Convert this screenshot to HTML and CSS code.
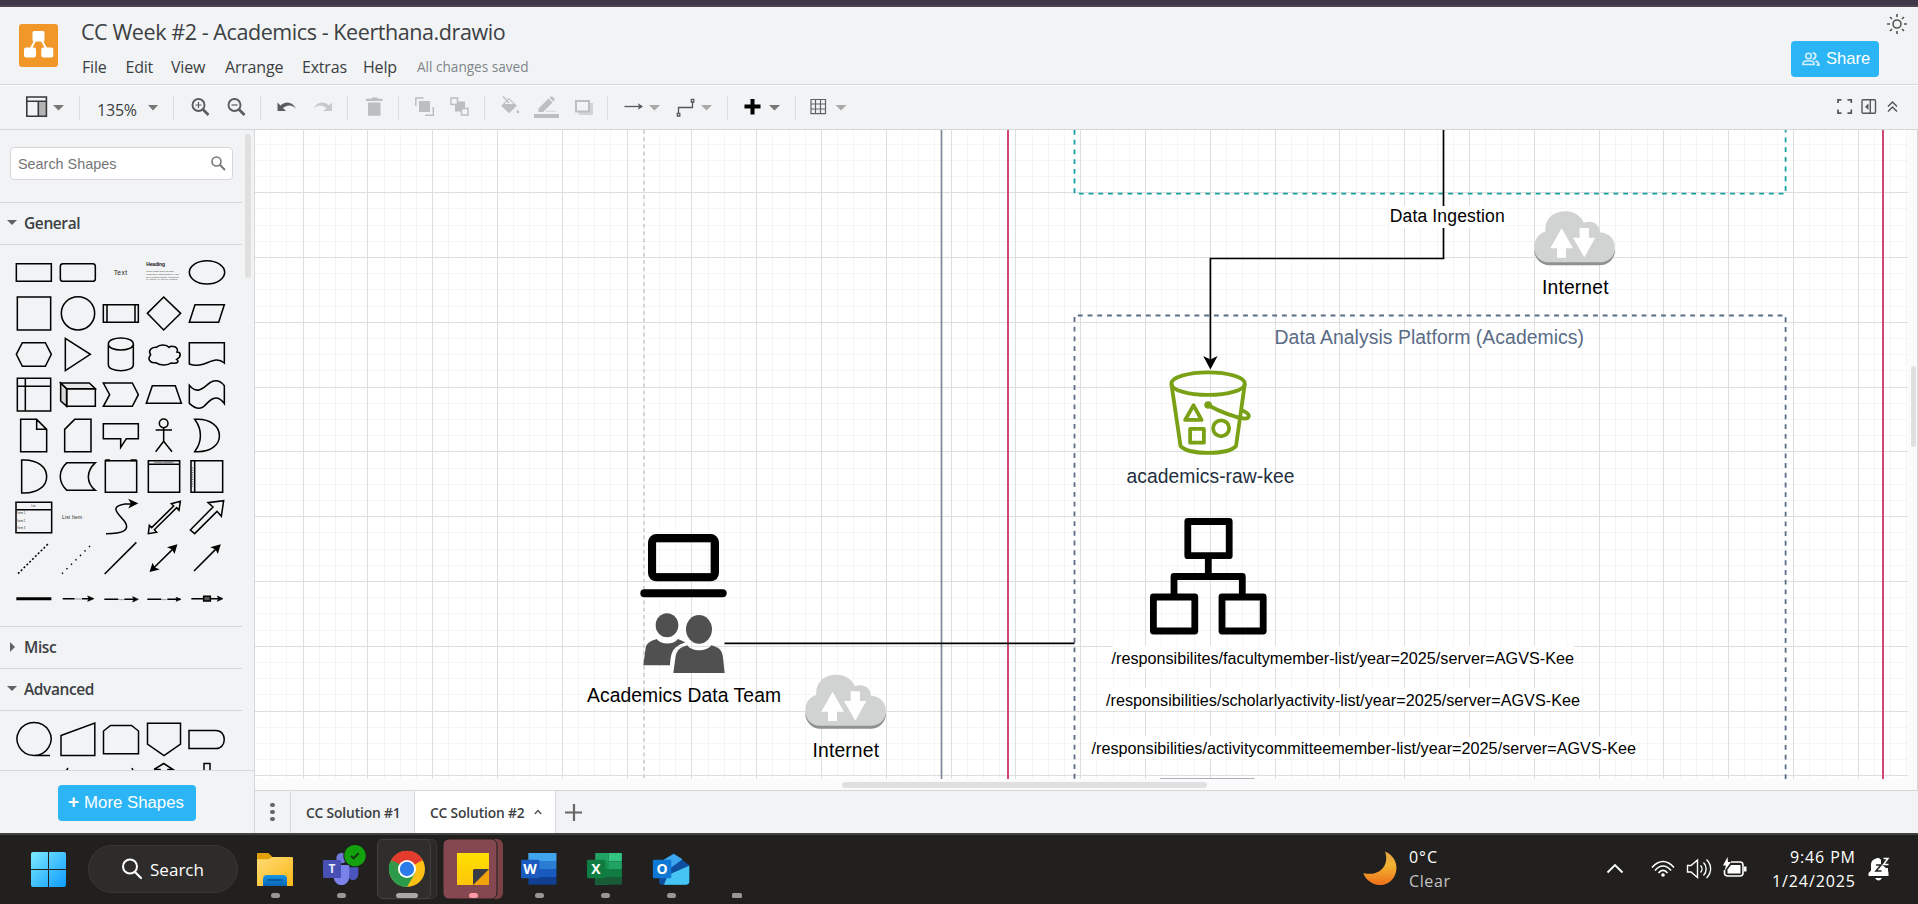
FILE: index.html
```html
<!DOCTYPE html>
<html lang="en">
<head>
<meta charset="utf-8">
<title>CC Week #2 - Academics - Keerthana.drawio</title>
<link rel="stylesheet" href="styles.css">
</head>
<body>
<div class="app">
  <div class="window-edge"></div>
  <header class="header">
    <svg class="logo" viewBox="0 0 39 43" width="39" height="43">
      <rect width="39" height="43" rx="3" fill="#f19629"/>
      <path d="M17 15L10.500 27M22 15L28.500 27" stroke="#fff" stroke-width="2"/>
      <rect x="13.500" y="7" width="12" height="10.500" rx="1.500" fill="#fff"/>
      <rect x="5" y="23.500" width="12" height="10" rx="2" fill="#fff"/>
      <rect x="22.300" y="23.500" width="12" height="10" rx="2" fill="#fff"/>
    </svg>
    <div class="titles">
      <div class="title">CC Week #2 - Academics - Keerthana.drawio</div>
      <nav class="menu"><span>File</span><span>Edit</span><span>View</span><span>Arrange</span><span>Extras</span><span>Help</span><span class="status">All changes saved</span></nav>
    </div>
    <div class="actions">
      <svg class="sun" viewBox="0 0 20 20" width="20" height="20" fill="none" stroke="#555" stroke-width="1.600">
        <circle cx="10" cy="10" r="4"/>
        <path d="M10 0V3M10 17V20M0 10H3M17 10H20M3 3L5 5M15 15L17 17M3 17L5 15M15 5L17 3"/>
      </svg>
      <div class="share">
        <svg viewBox="0 0 18 14" width="18" height="14" fill="none" stroke="#d5effc" stroke-width="1.500">
          <circle cx="6.500" cy="4" r="2.800"/><path d="M.8 12.600V11.500C1 9.500 4 8.800 6.500 8.800S12 9.500 12.200 11.500V12.600Z"/>
          <path d="M10.500 1.200C13 .5 14 2.500 13.600 4.500C13.200 6.300 12 7 10.500 6.800M13.500 8.800C16 9.500 16.900 10.500 16.900 13.200H14.600" stroke-width="1.800"/>
        </svg>
        <span>Share</span>
      </div>
    </div>
  </header>
  <div class="toolbar">
    <svg viewBox="0 86 90 43" width="90" height="43">
      <rect x="38" y="101" width="8" height="15" fill="#b3b3b3"/>
      <path d="M26.800 97H46.400V116.300H26.800ZM26.800 101.200H46.400M38.300 101V116" fill="none" stroke="#37393d" stroke-width="1.600"/>
      <path d="M53 105H64L58.500 110.500Z" fill="#777"/>
      <path d="M79.500 96V120" stroke="#dadce0"/>
    </svg>
    <span class="zoom">135%</span>
    <svg viewBox="140 86 720 43" width="720" height="43">
      <path d="M173.500 96V120M260.500 96V120M347.500 96V120M398.500 96V120M484.500 96V120M607.500 96V120M727.500 96V120M795.500 96V120" stroke="#dadce0"/>
      <path d="M148 105H158L153 110.500ZM769 105H780L774.500 110.500Z" fill="#777"/>
      <path d="M649 105H660L654.500 110.500ZM701 105H712L706.500 110.500ZM835.500 105H846.500L841 110.500Z" fill="#aaa"/>
      <g fill="none" stroke="#5a5c60" stroke-width="1.900">
        <circle cx="198.500" cy="105" r="6"/><path d="M203 109.500L208.500 115" stroke-width="2.600"/>
        <path d="M195.500 105H201.500M198.500 102V108" stroke-width="1.200"/>
        <circle cx="234.500" cy="105" r="6"/><path d="M239 109.500L244.500 115" stroke-width="2.600"/>
        <path d="M231.500 105H237.500" stroke-width="1.200"/>
      </g>
      <path d="M277.500 102.500V111H286L283 108C287 104.500 292 104.500 296 108.500C292.500 101.500 285.500 100.500 280.500 105.500Z" fill="#5a5c60"/>
      <path d="M332 102.500V111H323.500L326.500 108C322.500 104.500 317.500 104.500 313.500 108.500C317 101.500 324 100.500 329 105.500Z" fill="#c6c8ca"/>
      <path d="M366 98.700H371L372.500 97.500H377L378.500 98.700H382.500V101H366ZM368 102.500H380.500V115.800H368Z" fill="#bcbec1"/>
      <g fill="#bcbec1">
        <rect x="419" y="101" width="11" height="11"/>
        <path d="M415.800 106V98H423.500M433.300 107V115.300H425" fill="none" stroke="#bcbec1" stroke-width="1.500"/>
        <rect x="455" y="101.500" width="10" height="10"/>
        <path d="M451 98H457.500V104.500H451ZM461.500 108.500H468V115H461.500Z" fill="#f1f3f4" stroke="#bcbec1" stroke-width="1.500"/>
        <path d="M509 98L516.800 105.800L509 113.300L501.200 105.800ZM517.500 109.500Q520.500 112 518.500 113.300Q516.500 113.500 516.500 111.500Z"/>
        <path d="M509 99.500L504.500 104H513.500Z" fill="#f1f3f4"/><path d="M503 96.500L509 103" stroke="#bcbec1" stroke-width="1.300"/>
        <path d="M538.500 108.500L548.500 98.500L552.500 102.500L543 112H538.500ZM549.500 97.500Q551.500 95.500 554 98Q555.500 100 553.500 101.500ZM534 114H559V118H534Z"/>
        <path d="M546 111.300H555.500" stroke="#d2d4d6" stroke-width="1"/>
        <rect x="578.500" y="103" width="14.500" height="12" fill="#d2d4d6"/>
        <rect x="576" y="101" width="13" height="10.500" fill="#f1f3f4" stroke="#bcbec1" stroke-width="2"/>
      </g>
      <path d="M624.500 106.500H640" stroke="#55575b" stroke-width="1.300"/><path d="M638 103.200L643 106.500L638 109.800L639 106.500Z" fill="#55575b"/>
      <path d="M678.500 113V107.500H692.500V102M677.300 113.300H679.800V116H677.300ZM691.300 99.300H693.800V102H691.300Z" fill="none" stroke="#55575b" stroke-width="1.300"/>
      <path d="M752.500 99V114.500M744.500 106.600H760.500" stroke="#000" stroke-width="4"/>
      <path d="M811 99.500H825.500V113.700H811ZM815.500 99V114M820.500 99V114M811 104H826M811 109H826" fill="none" stroke="#606266" stroke-width="1.200"/>
    </svg>
    <div class="spacer"></div>
    <svg viewBox="1830 86 88 43" width="88" height="43" fill="none" stroke="#55575b" stroke-width="1.700">
      <path d="M1838 103V99.800H1841.500M1847.500 99.800H1851.300V103M1851.300 109.500V113.200H1847.500M1841.500 113.200H1838V109.500"/>
      <rect x="1862" y="99.800" width="13.500" height="13.500" rx="1" stroke-width="1.400"/><path d="M1870.300 100V113" stroke-width="1.400"/><path d="M1868.500 103.500V110L1865 106.700Z" fill="#55575b" stroke="none"/>
      <path d="M1888 106.500L1892.500 102L1897 106.500M1888 111.500L1892.500 107L1897 111.500" stroke-width="1.500"/>
    </svg>
  </div>
  <main class="work">
    <aside class="sidebar">
      <div class="palettes">
        <div class="search-row"><div class="search"><span>Search Shapes</span>
          <svg viewBox="0 0 15 15" width="15" height="15" fill="none" stroke="#777" stroke-width="1.600"><circle cx="5.500" cy="5.500" r="4.500"/><path d="M9 9L14 14" stroke-width="2"/></svg></div></div>
        <div class="section"><i class="tri down"></i>General</div>
        <svg class="shapes" viewBox="0 15 726 1143" width="242" height="381" fill="none" stroke="#000" stroke-width="4.600">
          <path d="M49 71H154V124H49Z"/><rect x="181" y="71" width="105" height="53" rx="8"/>
          <text x="361" y="104" text-anchor="middle" font-size="20" class="t" textLength="40">Text</text>
          <text x="439" y="77" font-size="15" font-weight="bold" class="t" textLength="56">Heading</text>
          <g font-size="6" class="t"><text x="439" y="96" textLength="84">Lorem ipsum dolor sit amet,</text><text x="439" y="105" textLength="97">consectetur adipisicing elit, sed</text><text x="439" y="113" textLength="97">do eiusmod tempor incididunt</text><text x="439" y="121" textLength="92">ut labore et dolore magna</text></g>
          <ellipse cx="621" cy="97" rx="53" ry="35"/>
          <path d="M52 171H152V270H52Z"/><circle cx="234" cy="220" r="50"/>
          <path d="M310 194H415V247H310ZM321 194V247M405 194V247M491 171L542 220L491 270L442 220ZM585 194H673L656 247H568Z"/>
          <path d="M67 308H136L154 343L136 379H67L49 343ZM196 295L271 343L196 392Z"/>
          <path d="M325 312V374C325 398 400 398 400 374V312M400 312C400 336 325 336 325 312C325 288 400 288 400 312Z"/>
          <path d="M470 322C452 320 444 334 452 344C440 358 452 371 467 368C480 379 506 375 513 369C534 373 538 364 530 358C546 349 542 336 531 336C538 320 514 315 507 322C498 311 477 314 470 322Z"/>
          <path d="M568 308H673V369C640 341 614 390 568 372Z"/>
          <path d="M52 415H152V513H52ZM52 439H152M76 415V513"/>
          <path d="M182 429L200 446V499L182 483Z" fill="#d6d6d6"/><path d="M182 429H268L286 446H200Z" fill="#e6e6e6"/><path d="M200 446H286V499H200Z"/>
          <path d="M310 429H397L415 464L397 499H310L329 464ZM457 437H526L544 490H439Z"/>
          <path d="M568 436C597 472 620 430 635 425C650 419 663 424 673 437V491C648 457 628 482 612 499C598 511 580 501 568 490Z"/>
          <path d="M62 538H110L140 568V635H62ZM110 538V568H140M224 538H273V635H194V568ZM310 551H415V596H379L362 622V596H310Z"/>
          <circle cx="491" cy="550" r="13"/><path d="M491 563V604M467 570H516M467 635L491 604L516 635"/>
          <path d="M584 538C680 530 686 642 584 635C607 605 607 568 584 538ZM65 660C165 655 165 765 65 759Z"/>
          <path d="M201 668H286C258 695 258 727 286 751H201C174 727 174 692 201 668ZM316 662H410V757H316Z"/><path d="M316 661H330M392 661H410" stroke-width="6"/>
          <path d="M445 662H539V757H445ZM445 673H539M573 662H668V757H573ZM584 662V757"/>
          <text x="491" y="670" font-size="7" font-weight="bold" text-anchor="middle" class="t">Vertical Container</text>
          <path d="M578 682V740" stroke-width="2" stroke-dasharray="3 4"/>
          <path d="M48 787H155V878H48ZM48 809H155"/>
          <g class="t" font-size="8"><text x="100" y="801" text-anchor="middle">List</text><text x="52" y="821" textLength="24">Item 1</text><text x="52" y="845" textLength="24">Item 2</text><text x="52" y="866" textLength="24">Item 3</text></g>
          <text x="186" y="837" font-size="14.500" class="t" textLength="60">List Item</text>
          <path d="M318 881C370 881 390 870 375 846C355 820 325 800 375 792H402"/><path d="M410 790L390 781L395 790L390 800Z" fill="#000"/>
          <path d="M445 881L448 856L455 863L521 798L514 791L541 784L537 811L530 803L463 869L470 877ZM571 870L639 801L624 788L671 782L664 829L651 814L584 881Z"/>
          <path d="M54 1001L147 909" stroke-dasharray="6 6"/><path d="M186 1001L275 913" stroke-dasharray="4 15"/>
          <path d="M314 1002L409 907M455 990L526 920M582 993L655 920"/>
          <path d="M452 993L458 974L463 984L472 988ZM529 916L523 936L518 926L508 922ZM659 916L653 936L648 926L638 922Z" fill="#000"/>
          <path d="M49 1076H154" stroke-width="9"/>
          <path d="M188 1076H224M246 1076H272M313 1078H355M373 1078H405M442 1078H484M502 1078H540M574 1076H610M632 1076H660"/>
          <path d="M282 1076L263 1068L267 1076L263 1084ZM415 1078L398 1070L402 1078L398 1086ZM543 1078L528 1072L532 1078L528 1084ZM669 1076L652 1068L656 1076L652 1084Z" fill="#000" stroke-width="2"/>
          <path d="M611 1069H631V1083H611Z" fill="#555"/><path d="M226 1077H245M357 1079H371M486 1079H500" stroke-width="2" stroke="#666"/>
        </svg>
        <div class="section"><i class="tri right"></i>Misc</div>
        <div class="section"><i class="tri down"></i>Advanced</div>
        <svg class="shapes" viewBox="0 711 242 61" width="242" height="61" fill="none" stroke="#000" stroke-width="1.500">
          <path d="M50 755.500H34A17 16.500 0 1 1 34.100 755.500M61 735.500L94.800 723V755.500H61ZM103.500 731L110.500 725.500H131.500L138.500 731V753.700H103.500ZM147.500 723.300H180.500V744L164 755.500L147.500 744ZM189 730.500H216C227 730.500 227 748.500 216 748.500H189Z"/>
          <path d="M23 771H48M65 773L68 768M132 768L134 773M154 769.500L163.700 763.500L173 769.500H168V773M160 773V769.500H154M204 773V763.500H210V773"/>
        </svg>
        <i class="side-thumb"></i>
      </div>
      <div class="more-row"><div class="more"><b>+</b>More Shapes</div></div>
    </aside>
    <section class="stage">
      <div class="canvas">
        <svg class="diagram" viewBox="255 130 1653 649" width="1653" height="649">
          <path id="minor" class="minor"/><path id="major" class="major"/>
          <path d="M644 130V779" stroke="#d5d5d5" stroke-width="2" stroke-dasharray="3.700 3.540"/>
          <path d="M941.500 130V779" stroke="#7d8998" stroke-width="1.700"/>
          <path d="M1008 130V779M1883 130V779" stroke="#cd3468" stroke-width="1.800"/>
          <path d="M1074.500 130V193.700H1785.600V130" class="dash" stroke="#16a2a4"/>
          <path d="M1785.600 779V315.500H1074.500V779" class="dash" stroke="#5a6c86"/>
          <g fill="none" stroke="#000" stroke-width="1.700">
            <path d="M1443.500 130V258.500H1210.400V360M724.500 643.400H1074.500"/>
          </g>
          <path d="M1210.400 369.500L1203.200 356L1210.400 359.500L1217.600 356Z"/>
          <rect x="1389" y="206" width="116" height="22" fill="#fff"/>
          <rect x="1112" y="646" width="462" height="22" fill="#fff"/><rect x="1106" y="688" width="474" height="22" fill="#fff"/><rect x="1091" y="736.500" width="545" height="22" fill="#fff"/>
          <path d="M1160 778.500H1254.500" stroke="#aab0b9"/>
          <g transform="translate(1060 120) scale(.3827 .3333)" class="bucket">
            <ellipse cx="387" cy="791" rx="96" ry="34"/>
            <path d="M291 791L315 978C335 1006 440 1006 460 978L483 791"/>
            <path d="M349 856L370 900H327ZM340 927H376V968H340ZM386 855C420 876 450 890 482 896C500 896 497 880 474 871"/>
            <ellipse cx="421" cy="925" rx="21" ry="24"/><ellipse cx="387" cy="855" rx="9" ry="10"/>
          </g>
          <g fill="none" stroke="#000" stroke-width="6.800" stroke-linejoin="round">
            <path d="M1187.800 521.500H1229.200V555.700H1187.800ZM1153.400 597H1194.800V631H1153.400ZM1222 597H1263.200V631H1222ZM1208.300 556V576.500M1174 597V576.500H1242.300V597"/>
          </g>
          <g transform="translate(560 500) scale(.3333)">
            <rect x="276" y="114" width="189" height="118" rx="13" fill="none" stroke="#000" stroke-width="24"/>
            <path d="M287 126H453V221H287Z" fill="none" stroke="#000" stroke-width="2"/>
            <path d="M253 280H488" stroke="#000" stroke-width="24" stroke-linecap="round"/>
            <g fill="#505050">
              <ellipse cx="321" cy="376" rx="34" ry="36"/><ellipse cx="417" cy="388" rx="39" ry="43"/>
              <path d="M250 496L257 443C261 427 275 422 290 417C304 435 340 435 354 417L376 427C338 441 333 455 330 496Z"/>
              <path d="M340 519L347 468C352 446 365 442 382 436C395 456 440 456 454 436C475 443 486 447 489 472L494 519Z"/>
            </g>
          </g>
          <defs><g id="cloud" transform="scale(.3333)">
            <path d="M45 162C18 162 0 139 0 117H242C242 140 225 162 195 162Z" fill="#8f9191"/>
            <path d="M45 153C15 153 0 132 0 108C0 82 14 66 33 61C30 20 60 0 93 0C123 0 141 17 149 35C172 25 196 38 197 63C225 65 242 84 242 108C242 134 225 153 195 153Z" fill="#d1d3d3"/>
            <path d="M82 51L116 111H95V139H68V111H48ZM136 50H164V79H183L150 138L116 79H136Z" fill="#fff"/>
          </g></defs>
          <use href="#cloud" transform="translate(805.300 674.700)"/><use href="#cloud" transform="translate(1534.300 211.300)"/>
          <g class="label">
            <text x="1389.700" y="222" font-size="17.550" textLength="115">Data Ingestion</text>
            <text x="1542" y="293.700" font-size="19.300" textLength="66.500">Internet</text>
            <text x="1274.500" y="344" font-size="19.400" textLength="309.500" fill="#5a6c86">Data Analysis Platform (Academics)</text>
            <text x="1126.500" y="483" font-size="19.300" textLength="168" fill="#232f3e">academics-raw-kee</text>
            <text x="587" y="701.700" font-size="19.300" textLength="194">Academics Data Team</text>
            <text x="812.500" y="756.700" font-size="19.300" textLength="66.500">Internet</text>
            <text x="1111.500" y="664" font-size="16.200" textLength="462.500">/responsibilites/facultymember-list/year=2025/server=AGVS-Kee</text>
            <text x="1106" y="706" font-size="16.200" textLength="474">/responsibilities/scholarlyactivity-list/year=2025/server=AGVS-Kee</text>
            <text x="1091.500" y="754" font-size="16.200" textLength="544.500">/responsibilities/activitycommitteemember-list/year=2025/server=AGVS-Kee</text>
          </g>
        </svg>
        <i class="thumb-v"></i><i class="thumb-h"></i>
      </div>
      <div class="tabs">
        <div class="dots"><i></i><i></i><i></i></div>
        <div class="tab t1">CC Solution #1</div>
        <div class="tab t2">CC Solution #2<svg viewBox="0 0 8 6" width="8" height="6" fill="none" stroke="#555" stroke-width="1.500"><path d="M.8 5L4 1.500L7.200 5"/></svg></div>
        <svg class="add" viewBox="0 0 18 18" width="18" height="18" stroke="#666" stroke-width="2.200"><path d="M9 0V17M0 8.500H17"/></svg>
      </div>
    </section>
  </main>
  <footer class="taskbar">
    <svg viewBox="0 835 760 69" width="760" height="69">
      <defs>
        <linearGradient id="win" x2="1" y2="1"><stop offset="0" stop-color="#7deaff"/><stop offset="1" stop-color="#0c9bfd"/></linearGradient>
        <linearGradient id="fold" x2="1" y2="1"><stop offset="0" stop-color="#ffdc75"/><stop offset="1" stop-color="#fbb819"/></linearGradient>
        <linearGradient id="blue" y2="1" x2="0"><stop offset="0" stop-color="#1496e4"/><stop offset="1" stop-color="#0864b4"/></linearGradient>
        <linearGradient id="note" x2="0" y2="1"><stop offset="0" stop-color="#ffe100"/><stop offset="1" stop-color="#fcc50a"/></linearGradient>
      </defs>
      <path d="M33 852H48V869H31V854Q31 852 33 852ZM49 852H64Q66 852 66 854V869H49ZM31 870H48V887H33Q31 887 31 885ZM49 870H66V885Q66 887 64 887H49Z" fill="url(#win)"/>
      <rect x="88.500" y="845.500" width="149" height="47" rx="23.500" fill="#2d2c2b" stroke="#383736"/>
      <circle cx="130" cy="866.500" r="7" fill="none" stroke="#fff" stroke-width="2"/><path d="M135 872L141 878" stroke="#fff" stroke-width="2.200" stroke-linecap="round"/>
      <text x="150" y="876" font-size="17" fill="#fff" textLength="54" lengthAdjust="spacingAndGlyphs" class="ui">Search</text>
      <g transform="translate(240 836) scale(.3333)">
        <path d="M51 54Q51 51 54 51H85L97 62V75H51Z" fill="#e2a109"/>
        <path d="M51 70H85L97 63H156Q159 63 159 66V150H51Z" fill="url(#fold)"/>
        <path d="M69 150V129Q69 117 81 117H129Q141 117 141 129V150Z" fill="url(#blue)"/><path d="M83 132H126" stroke="#075092" stroke-width="4" stroke-linecap="round"/>
        <circle cx="305" cy="66" r="16" fill="#7078dc"/><path d="M327 94H355V112C355 138 327 137 327 122Z" fill="#4b53bc"/>
        <path d="M283 87H328V120C328 156 283 156 281 122Z" fill="#7b83eb"/><rect x="249" y="72" width="54" height="54" rx="4" fill="#4950b4"/>
        <text x="276" y="112" font-size="36" font-weight="bold" text-anchor="middle" fill="#e8e9ff" class="ui">T</text>
        <circle cx="344" cy="59" r="34" fill="#21201e"/><circle cx="345" cy="59" r="32" fill="#13a10e"/><path d="M333 60L341 67L356 52" fill="none" stroke="#123a12" stroke-width="6"/>
        <rect x="432" y="10" width="158" height="178" rx="16" fill="#2a2928" stroke="#3b3a39" stroke-width="3"/>
        <rect x="413" y="10" width="158" height="178" rx="16" fill="#2f2e2d" stroke="#454443" stroke-width="3"/>
        <circle cx="501" cy="99" r="54" fill="#fdc015"/>
        <path d="M501 99L454 72A54 54 0 0 1 548 72Z" fill="#e33b2e"/>
        <path d="M454 72A54 54 0 0 0 501 153L525 112L501 99L477 112Z" fill="#2b9a4b"/>
        <path d="M454 72H501V99H470Z" fill="#e33b2e"/><path d="M454 72L477 112L490 90Z" fill="#2b9a4b"/>
        <circle cx="501" cy="99" r="27" fill="#fff"/><circle cx="501" cy="99" r="21.500" fill="#2b7bea"/>
        <rect x="627" y="9" width="162" height="180" rx="18" fill="#7c4147"/><rect x="609" y="9" width="162" height="180" rx="18" fill="#854850" stroke="#21201e" stroke-width="3"/>
        <path d="M651 51H747V99L699 147H651Z" fill="url(#note)"/><path d="M747 99V147H699Z" fill="#f0a30a"/><path d="M699 147V104Q699 99 704 99H747Z" fill="#393b42"/>
      </g>
      <g transform="translate(0 820) scale(.4847 .3333)">
        <g><path d="M1090 99H1148V124H1090Z" fill="#41a5ee"/><path d="M1090 123H1148V147H1090Z" fill="#2b7cd3"/><path d="M1090 147H1148V171H1090Z" fill="#185abd"/><path d="M1090 171H1148V194H1090Z" fill="#103f91"/></g>
        <rect x="1075" y="119" width="38" height="56" rx="3" fill="#1a5bc0"/>
        <path d="M1228 99H1256V194H1228Z" fill="#21a366"/><path d="M1256 99H1283V124H1256Z" fill="#33c481"/><path d="M1228 124H1256V147H1228Z" fill="#1a9355"/><path d="M1256 124H1283V147H1256Z" fill="#21a366"/><path d="M1228 147H1283V171H1228Z" fill="#107c41"/><path d="M1228 171H1283V194H1228Z" fill="#185c37"/>
        <rect x="1211" y="119" width="38" height="56" rx="3" fill="#107c41"/>
        <path d="M1360 130L1390 101L1422 135V185Q1422 194 1414 194H1366Q1360 194 1360 185Z" fill="#0f4fa0"/>
        <path d="M1362 125L1390 101L1408 118L1378 150Z" fill="#3ba7f0"/><path d="M1378 165L1422 137V185Q1422 194 1414 194H1370Z" fill="#46c5f5"/>
        <rect x="1347" y="119" width="38" height="56" rx="3" fill="#0f78d4"/>
      </g>
      <g class="ui" fill="#fff" font-size="14" font-weight="bold" text-anchor="middle"><text x="530" y="874">W</text><text x="596" y="874">X</text><text x="662" y="874">O</text></g>
      <g fill="#989796"><rect x="271" y="893" width="9" height="5" rx="2.500"/><rect x="337" y="893" width="9" height="5" rx="2.500"/><rect x="396" y="893" width="22" height="5" rx="2.500" fill="#aaa8a7"/><rect x="469" y="893" width="9" height="5" rx="2.500" fill="#ff9aa5"/><rect x="535" y="893" width="9" height="5" rx="2.500"/><rect x="601" y="893" width="9" height="5" rx="2.500"/><rect x="667" y="893" width="9" height="5" rx="2.500"/><rect x="732" y="893" width="10" height="5" rx="1.500"/></g>
    </svg>
    <svg viewBox="1350 835 568 69" width="568" height="69">
      <defs><linearGradient id="moon" x2="0" y2="1"><stop offset="0" stop-color="#e3a04a"/><stop offset=".4" stop-color="#f2b430"/><stop offset="1" stop-color="#ee6f1a"/></linearGradient></defs>
      <path d="M1385 851.500C1394 855 1398 864 1396 872C1393 884 1381 888 1372 883C1367 880 1364.500 877 1363.500 873C1379 877 1390 866 1385 851.500Z" fill="url(#moon)"/>
      <g class="ui" font-size="16" fill="#fff">
        <text x="1409" y="863" textLength="28">0°C</text><text x="1409" y="887" fill="#c4c3c2" textLength="41">Clear</text>
        <text x="1790" y="863" textLength="65">9:46 PM</text><text x="1772" y="887" textLength="83">1/24/2025</text>
      </g>
      <g fill="none" stroke="#fff" stroke-width="1.600">
        <path d="M1607.500 872.500L1615 865L1622.500 872.500" stroke-width="1.900"/>
        <path d="M1652 867.500C1659 859.500 1667 859.500 1674 867.500M1655 870.500C1660 864.500 1666 864.500 1671 870.500M1658.500 873C1661 869.500 1665 869.500 1667.500 873"/><circle cx="1663" cy="875" r="1.800" fill="#fff" stroke="none"/>
        <path d="M1687.500 865.500H1691L1697.500 860V877.500L1691 872H1687.500ZM1700.500 865.500C1702.500 867.500 1702.500 870.500 1700.500 872.500M1703.500 862.500C1707 866 1707 872 1703.500 875.500M1706.500 859.500C1712 865 1712 872.500 1706.500 878" stroke-width="1.400"/>
        <path d="M1731 862H1740Q1743 862 1743 865V873Q1743 876 1740 876H1728Q1724.500 876 1724.500 873V870" /><path d="M1744 866.500H1746.500V871.500H1744Z" fill="#fff" stroke="none"/><path d="M1731 865H1740.500V873.500H1727.500V869.500Z" fill="#fff" stroke="none"/><path d="M1727.500 857L1723 865.500H1726L1724.500 871L1731 862H1728Z" fill="#fff" stroke="none"/>
      </g>
      <path d="M1868.500 876V873L1871 870.500V865C1871 860 1875 858 1879 858L1888 866V870.500L1888.500 873V876ZM1875 878H1882Q1878.500 883 1875 878Z" fill="#fff"/>
      <path d="M1881 857H1890V868H1886L1881 864Z" fill="#21201e"/>
      <path d="M1876 865H1881L1876 871H1881.500" fill="none" stroke="#21201e" stroke-width="1.600"/><path d="M1883.500 858.500H1888L1883.500 864.500H1888.500" fill="none" stroke="#fff" stroke-width="1.500"/>
    </svg>
  </footer>
</div>
<script src="grid.js"></script>
</body>
</html>
```
FILE: grid.js
```js
// Grid lines snapped to whole pixels: every fourth line is a major one.
const step = 16.2, left = 255, right = 1908, top0 = 130, bottom = 779;
const parts = { minor: "", major: "" };
for (let i = -16; i < 100; i++) {
  const x = Math.floor(497.4 + i * step) + 0.5;
  if (x > left && x < right) parts[i % 4 ? "minor" : "major"] += `M${x} ${top0}V${bottom}`;
}
for (let i = -4; i < 40; i++) {
  const y = Math.floor(192.6 + i * step) + 0.5;
  if (y > top0 && y < bottom) parts[i % 4 ? "minor" : "major"] += `M${left} ${y}H${right}`;
}
for (const id in parts) document.getElementById(id).setAttribute("d", parts[id]);
```
FILE: styles.css
```css
* { box-sizing: border-box; }
body { margin: 0; width: 1918px; height: 904px; overflow: hidden; font-family: "Open Sans", "Noto Sans", sans-serif; color: #3c4043; }
svg { display: block; flex: none; }
.app { height: 904px; display: flex; flex-direction: column; background: #f1f3f4; }
.window-edge { height: 7px; background: #40374b; border-bottom: 2px solid #4d4351; flex: none; }
.header { height: 78px; flex: none; display: flex; border-bottom: 1px solid #d5d7da; }
.logo { margin: 17px 0 0 19px; }
.titles { margin-left: 24px; white-space: nowrap; }
.title { margin: 9px 0 0 -1px; font-size: 21.5px; line-height: 32px; letter-spacing: -0.42px; }
.menu { display: grid; grid-template-columns: 43.5px 45.5px 54px 77px 61px 54px auto; margin-top: 6px; font-size: 16px; line-height: 26px; letter-spacing: -0.2px; }
.status { font-size: 13.6px; color: #80868b; letter-spacing: 0; }
.actions { margin-left: auto; width: 130px; }
.sun { margin: 7px 0 0 99px; }
.share { width: 88px; height: 36px; margin: 7px 0 0 3px; padding-left: 11px; display: flex; align-items: center; gap: 6px; border-radius: 4px; background: #2bb5f5; color: #fff; font: 16.6px "Liberation Sans", sans-serif; }
.toolbar { height: 45px; flex: none; border-top: 1px solid #fff; border-bottom: 1px solid #d5d7da; display: flex; align-items: flex-start; }
.zoom { width: 50px; padding: 12px 0 0 7px; font-size: 16px; line-height: 24px; letter-spacing: -0.2px; white-space: nowrap; }
.spacer { flex: 1; }
.work { height: 705px; flex: none; display: flex; border-bottom: 2px solid #414141; }
.sidebar { width: 255px; flex: none; border-right: 1px solid #d5d7da; display: flex; flex-direction: column; }
.palettes { height: 640px; overflow: hidden; position: relative; flex: none; }
.search-row { height: 72px; padding: 17px 0 0 10px; }
.search { width: 223px; height: 33px; border: 1px solid #d5d7da; border-radius: 4px; background: #fff; display: flex; align-items: center; justify-content: space-between; padding: 0 6px 0 7px; font: 14.4px "Liberation Sans", sans-serif; color: #757575; }
.section { width: 242px; height: 43px; border-top: 1px solid #d5d7da; border-bottom: 1px solid #d5d7da; display: flex; align-items: center; font-size: 15.5px; line-height: 20px; padding-bottom: 1px; font-weight: 600; letter-spacing: -0.4px; }
.section + .section { border-top: 0; height: 42px; }
.tri { width: 24px; height: 10px; display: block; }
.tri::before { content: ""; display: block; width: 0; height: 0; margin-left: 7px; border: 5px solid transparent; }
.tri.down::before { border-top-color: #5f6368; border-bottom: 0; margin-top: 2px; }
.tri.right::before { border-left-color: #5f6368; border-right: 0; margin-left: 10px; }
.t { fill: #222; stroke: none; font-family: "Liberation Sans", sans-serif; }
.side-thumb { position: absolute; left: 245px; top: 4px; width: 6px; height: 144px; border-radius: 3px; background: #e0e0e0; }
.more-row { border-top: 1px solid #d5d7da; flex: 1; padding: 14px 0 0 58px; }
.more { width: 138px; height: 36px; border-radius: 4px; background: #2bb5f5; color: #fff; font: 16.8px/36px "Liberation Sans", sans-serif; padding-left: 10px; white-space: nowrap; }
.more b { font-size: 19px; margin-right: 5px; font-weight: bold; line-height: 30px; }
.stage { flex: 1; display: flex; flex-direction: column; min-width: 0; }
.canvas { height: 661px; position: relative; flex: none; background: #fbfbfb; border-bottom: 1px solid #d5d7da; border-right: 1px solid #d5d7da; }
.diagram { background: #fff; }
.minor { stroke: #f5f5f5; }
.major { stroke: #dedede; }
.dash { fill: none; stroke-width: 1.8; stroke-dasharray: 4.86 4.86; }
.label { font-family: "Liberation Sans", sans-serif; }
.bucket * { fill: none; stroke: #7aa116; stroke-width: 3.8px; vector-effect: non-scaling-stroke; stroke-linejoin: round; }
.bucket ellipse:last-child { fill: #7aa116; stroke-width: 1px; }
.thumb-v, .thumb-h { position: absolute; background: #e0e0e0; border-radius: 3px; }
.thumb-v { left: 1656px; top: 236px; width: 5px; height: 81px; }
.thumb-h { left: 587px; top: 652px; width: 365px; height: 6px; }
.tabs { flex: 1; display: flex; font-size: 13.8px; font-weight: 600; letter-spacing: -0.15px; }
.dots { width: 36px; border-right: 1px solid #d5d7da; display: flex; flex-direction: column; align-items: center; justify-content: center; gap: 3px; }
.dots i { width: 5px; height: 4px; border-radius: 2px; background: #666; }
.tab { display: flex; align-items: center; padding-left: 15px; border-right: 1px solid #d5d7da; white-space: nowrap; }
.t1 { width: 124px; }
.t2 { width: 141px; background: #fff; gap: 10px; }
.add { margin: 13px 0 0 9px; }
.taskbar { flex: 1; background: #21201e; display: flex; justify-content: space-between; }
.ui { font-family: "Open Sans", sans-serif; }
```
